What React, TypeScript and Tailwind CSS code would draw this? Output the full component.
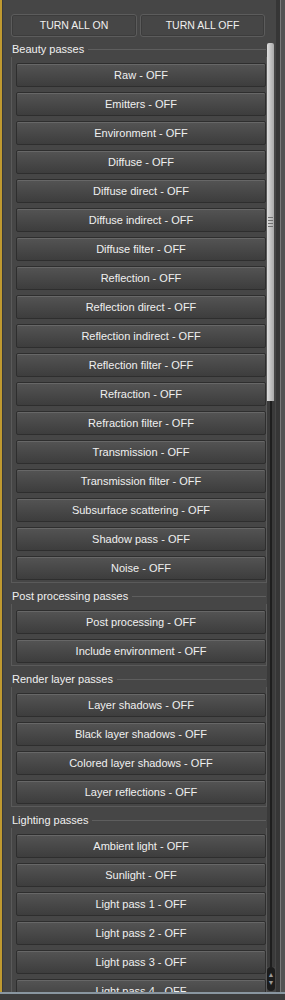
const beauty = [
  'Raw',
  'Emitters',
  'Environment',
  'Diffuse',
  'Diffuse direct',
  'Diffuse indirect',
  'Diffuse filter',
  'Reflection',
  'Reflection direct',
  'Reflection indirect',
  'Reflection filter',
  'Refraction',
  'Refraction filter',
  'Transmission',
  'Transmission filter',
  'Subsurface scattering',
  'Shadow pass',
  'Noise',
];

const groups = [
  { title: 'Beauty passes', items: beauty },
  { title: 'Post processing passes', items: ['Post processing', 'Include environment'] },
  { title: 'Render layer passes', items: ['Layer shadows', 'Black layer shadows', 'Colored layer shadows', 'Layer reflections'] },
  { title: 'Lighting passes', items: ['Ambient light', 'Sunlight', 'Light pass 1', 'Light pass 2', 'Light pass 3', 'Light pass 4'] },
];

const PassButton = ({ label }: { label: string }) => (
  <div className="h-[24px] shrink-0 flex items-center justify-center rounded-[2px] border border-[#2e2e2e] bg-linear-to-b from-[#545454] to-[#3d3d3d] shadow-[inset_0_1px_0_#676767] text-[11px] text-[#f0f0f0] whitespace-nowrap">
    {label} - OFF
  </div>
);

const TopButton = ({ label, w }: { label: string; w: string }) => (
  <div
    className={`${w} h-[23px] flex items-center justify-center rounded-[3px] border border-[#5c5c5c] bg-[#464646] shadow-[inset_0_0_0_1px_#3c3c3c] text-[10.5px] text-[#f0f0f0]`}
  >
    {label}
  </div>
);

export default function App() {
  return (
    <div
      className="w-[285px] h-[1000px] flex flex-col overflow-hidden bg-[#464646]"
      style={{ fontFamily: '"Liberation Sans", Arial, sans-serif' }}
    >
      <div className="h-[992px] flex">
        {/* gold edge of the dock */}
        <div className="w-[2px] bg-[#c09a30]" />
        <div className="w-[1px] bg-[#3a3a3a]" />

        <div className="w-[273px] flex flex-col pt-[14px]">
          <div className="flex gap-[3px] pl-[8px]">
            <TopButton label="TURN ALL ON" w="w-[126px]" />
            <TopButton label="TURN ALL OFF" w="w-[125px]" />
          </div>

          <div className="mt-[4px] flex flex-1 min-h-0">
            {/* scrolling list */}
            <div className="w-[264px] pl-[8px] flex flex-col gap-[5px] overflow-hidden">
              {groups.map((g) => (
                <div key={g.title} className="flex flex-col shrink-0">
                  <div className="h-[16px] flex items-center pl-[1px] pr-[1px]">
                    <span className="text-[11px] text-[#f0f0f0] whitespace-nowrap">{g.title}</span>
                    <div className="flex-1 ml-[4px] h-px bg-[#5e5e5e]" />
                  </div>
                  <div className="border-l border-r border-b border-[#5a5a5a] pl-[4px] pt-[6px] pb-[2px] flex flex-col gap-[5px]">
                    {g.items.map((it) => (
                      <PassButton key={it} label={it} />
                    ))}
                  </div>
                </div>
              ))}
            </div>

            {/* scrollbar */}
            <div className="w-[9px] flex flex-col pt-[2px]">
              <div className="h-[358px] mr-[2px] flex flex-col items-center justify-center gap-[2px] bg-linear-to-r from-[#dedede] to-[#a9a9a9] rounded-t-[2px]">
                <div className="w-[5px] h-px bg-[#707070]" />
                <div className="w-[5px] h-px bg-[#707070]" />
                <div className="w-[5px] h-px bg-[#707070]" />
                <div className="w-[5px] h-px bg-[#707070]" />
              </div>
              <div className="flex-1 flex justify-center bg-[#3a3a3a] mr-[1px]">
                <div className="w-[2px] bg-[#1e1e1e]" />
              </div>
              <div className="h-[24px] mr-[1px] mb-[1px] flex flex-col items-center justify-center rounded-[4px] bg-[#1c1c1c] text-[7px] leading-[8px] text-[#9a9a9a]">
                <span>▲</span>
                <span>▼</span>
              </div>
            </div>
          </div>
        </div>

        {/* right frame */}
        <div className="w-[4px] bg-[#363636]" />
        <div className="w-[1px] bg-[#7a7a7a]" />
        <div className="w-[4px] bg-[#535353]" />
      </div>
      <div className="h-[2px] bg-[#8996a0]" />
      <div className="flex-1 bg-[#3c3c3c]" />
    </div>
  );
}
